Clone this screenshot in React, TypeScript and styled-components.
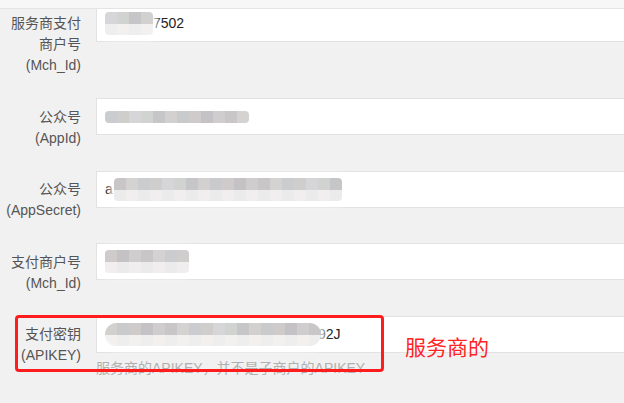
import React from 'react';
import styled, { createGlobalStyle } from 'styled-components';

const GlobalStyle = createGlobalStyle`
  html, body {
    margin: 0;
    padding: 0;
    background: #f1f1f1;
    overflow: hidden;
  }
  body {
    font-family: "Liberation Sans", Arial, "Noto Sans CJK SC", sans-serif;
  }
`;

const Page = styled.div`
  position: relative;
  width: 640px;
  height: 403px;
  background: #f1f1f1;
`;

const TopBar = styled.div`
  position: absolute;
  top: 0;
  left: 0;
  right: 0;
  height: 8px;
  background: #f7f7f7;
  border-bottom: 1px solid #e4e4e4;
  z-index: 2;
`;

const Form = styled.div`
  display: flex;
  flex-direction: column;
  gap: 22px;
  padding-top: 4.5px;
`;

const Row = styled.div`
  position: relative;
  display: flex;
  align-items: flex-start;
  gap: 15px;
`;

const Label = styled.div`
  width: 81px;
  flex: none;
  padding-top: 8.5px;
  text-align: right;
  font-size: 14px;
  line-height: 21px;
  color: #555;
`;

const Field = styled.div`
  flex: 1;
  display: flex;
  flex-direction: column;
`;

const Input = styled.div`
  display: flex;
  align-items: center;
  height: 35px;
  padding-left: 8px;
  background: #fff;
  border: 1px solid #e2e2e2;
  border-right: none;
  font-size: 14px;
  color: #222;
  white-space: nowrap;
`;

const Help = styled.div`
  margin-top: 6px;
  font-size: 14px;
  line-height: 19px;
  color: #b0b0b0;
`;

const Mosaic = styled.div<{ $pill?: boolean }>`
  display: flex;
  border-radius: ${(p) => (p.$pill ? '12px' : '4px')};
  overflow: hidden;
  filter: blur(0.6px);
  box-shadow: 0 0 6px 4px rgba(255, 255, 255, 0.9);
`;

const Column = styled.div`
  display: flex;
  flex-direction: column;
`;

const Cell = styled.div<{ $c: string; $h: number }>`
  width: 12px;
  height: ${(p) => p.$h}px;
  background: ${(p) => p.$c};
`;

const Annotation = styled.div`
  position: absolute;
  left: 15px;
  top: -1px;
  width: 363px;
  height: 51px;
  border: 3px solid #ff1c1c;
  border-radius: 4px;
  pointer-events: none;
`;

const Note = styled.div`
  position: absolute;
  left: 405px;
  top: 17px;
  font-family: "Noto Sans CJK SC", sans-serif;
  font-size: 21px;
  line-height: 27px;
  color: #ff2323;
`;

const tops = ['#d6d6d8', '#cfcbcb', '#cbcccf', '#d3d1cf', '#c8c6c7', '#d1d3d1', '#c5c2c5', '#d0cecc', '#c9cacb', '#d4d3d1', '#c6c6c9', '#cfcdce'];
const bottoms = ['#eeeeee', '#f0eeee', '#ececed', '#f2f1f0', '#ebebeb', '#efefef'];

const Blur: React.FC<{ cells: number; rows?: number; pill?: boolean; seed?: number }> = ({ cells, rows = 2, pill, seed = 0 }) => (
  <Mosaic $pill={pill}>
    {Array.from({ length: cells }).map((_, i) => (
      <Column key={i}>
        <Cell $c={tops[(i * 5 + seed) % tops.length]} $h={12} />
        {rows > 1 && <Cell $c={bottoms[(i * 3 + seed) % bottoms.length]} $h={11} />}
      </Column>
    ))}
  </Mosaic>
);

const Letter = styled.span`
  margin-right: 1px;
`;

const Tail = styled.span`
  margin-left: -3px;
`;

const App: React.FC = () => (
  <Page>
    <GlobalStyle />
    <TopBar />
    <Form>
      <Row>
        <Label>
          服务商支付
          <br />
          商户号
          <br />
          (Mch_Id)
        </Label>
        <Field>
          <Input>
            <Blur cells={4} />
            <span>7502</span>
          </Input>
        </Field>
      </Row>
      <Row>
        <Label>
          公众号
          <br />
          (AppId)
        </Label>
        <Field>
          <Input>
            <Blur cells={12} rows={1} seed={2} />
          </Input>
        </Field>
      </Row>
      <Row>
        <Label>
          公众号
          <br />
          (AppSecret)
        </Label>
        <Field>
          <Input>
            <Letter>a</Letter>
            <Blur cells={19} seed={4} />
          </Input>
        </Field>
      </Row>
      <Row>
        <Label>
          支付商户号
          <br />
          (Mch_Id)
        </Label>
        <Field>
          <Input>
            <Blur cells={7} seed={1} />
          </Input>
        </Field>
      </Row>
      <Row>
        <Label>
          支付密钥
          <br />
          (APIKEY)
        </Label>
        <Field>
          <Input>
            <Blur cells={18} pill seed={3} />
            <Tail>92J</Tail>
          </Input>
          <Help>服务商的APIKEY，并不是子商户的APIKEY</Help>
        </Field>
        <Annotation />
        <Note>服务商的</Note>
      </Row>
    </Form>
  </Page>
);

export default App;
